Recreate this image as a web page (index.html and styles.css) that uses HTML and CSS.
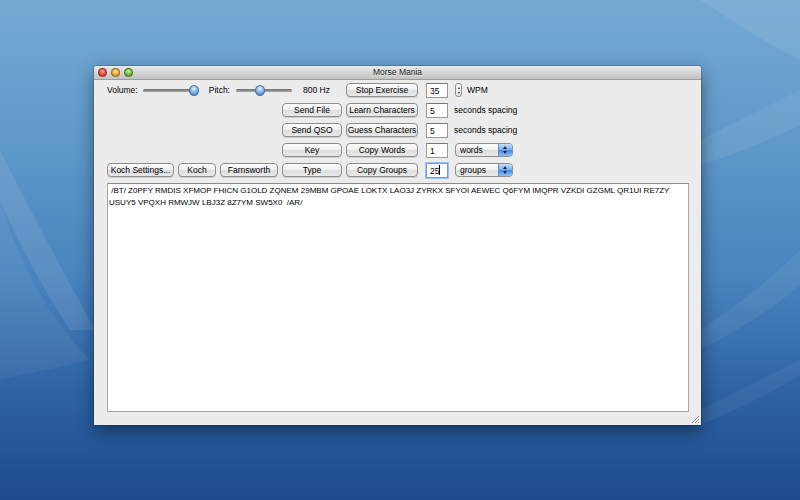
FILE: index.html
```html
<!DOCTYPE html>
<html lang="en">
<head>
    <meta charset="UTF-8">
    <title>Morse Mania</title>
    <link rel="stylesheet" href="styles.css">
</head>
<body>
<div class="desktop">
    <svg class="wallpaper" width="800" height="500" viewBox="0 0 800 500">
        <path d="M0 150 Q40 230 95 330 L70 330 Q25 260 0 200 Z" fill="#ffffff" fill-opacity="0.09"/>
        <path d="M0 200 Q30 300 90 360 L0 380 Z" fill="#ffffff" fill-opacity="0.05"/>
        <path d="M700 0 Q760 40 800 60 L800 0 Z" fill="#ffffff" fill-opacity="0.08"/>
        <path d="M700 140 Q760 110 800 90 L800 125 Q750 150 700 165 Z" fill="#ffffff" fill-opacity="0.07"/>
        <path d="M700 330 Q760 290 800 250 L800 285 Q760 320 700 350 Z" fill="#ffffff" fill-opacity="0.06"/>
        <path d="M700 410 Q760 380 800 360 L800 375 Q760 400 700 425 Z" fill="#ffffff" fill-opacity="0.05"/>
    </svg>

    <div class="window">
        <div class="titlebar">
            <div class="lights">
                <span class="light red"></span>
                <span class="light yellow"></span>
                <span class="light green"></span>
            </div>
            <div class="title">Morse Mania</div>
        </div>

        <div class="content">
            <div class="controls">
                <div class="audio-row">
                    <span class="label">Volume:</span>
                    <div class="slider volume"><div class="track"></div><div class="knob"></div></div>
                    <span class="label pitch-label">Pitch:</span>
                    <div class="slider pitch"><div class="track"></div><div class="knob"></div></div>
                    <span class="label hz">800 Hz</span>
                </div>
                <button class="btn col5">Stop Exercise</button>
                <div class="field col6">35</div>
                <div class="extra col7">
                    <div class="stepper"><span class="up"></span><span class="down"></span></div>
                    <span class="label wpm">WPM</span>
                </div>

                <button class="btn col4">Send File</button>
                <button class="btn col5">Learn Characters</button>
                <div class="field col6">5</div>
                <div class="extra col7"><span class="label spacing">seconds spacing</span></div>

                <button class="btn col4">Send QSO</button>
                <button class="btn col5">Guess Characters</button>
                <div class="field col6">5</div>
                <div class="extra col7"><span class="label spacing">seconds spacing</span></div>

                <button class="btn col4">Key</button>
                <button class="btn col5">Copy Words</button>
                <div class="field col6">1</div>
                <div class="extra col7">
                    <div class="popup"><span class="popup-text">words</span><span class="popup-arrows"></span></div>
                </div>

                <button class="btn">Koch Settings...</button>
                <button class="btn">Koch</button>
                <button class="btn">Farnsworth</button>
                <button class="btn">Type</button>
                <button class="btn">Copy Groups</button>
                <div class="field col6 focused">25<span class="caret"></span></div>
                <div class="extra col7">
                    <div class="popup"><span class="popup-text">groups</span><span class="popup-arrows"></span></div>
                </div>
            </div>

            <div class="output">
                <div class="line">&nbsp;/BT/ Z0PFY RMDIS XFMOP FHICN G1OLD ZQNEM 29MBM GPOAE LOKTX LAO3J ZYRKX SFYOI AEWEC Q6FYM IMQPR VZKDI GZGML QR1UI RE7ZY</div>
                <div class="line">USUY5 VPQXH RMWJW LBJ3Z 8Z7YM SW5X0 &nbsp;/AR/</div>
            </div>
        </div>

        <svg class="grip" width="10" height="10" viewBox="0 0 10 10">
            <path d="M9 2 L2 9 M9 5 L5 9 M9 8 L8 9" stroke="#9a9a9a" stroke-width="1"/>
        </svg>
    </div>
</div>
</body>
</html>
```

FILE: styles.css
```css
body {
    margin: 0;
    overflow: hidden;
    font-family: "Liberation Sans", Arial, sans-serif;
}

.desktop {
    position: relative;
    width: 800px;
    height: 500px;
    background: linear-gradient(180deg, #74a9d4 0%, #629bcb 25%, #4a84be 55%, #2e63a4 78%, #1d4a8c 100%);
    overflow: hidden;
}

.wallpaper {
    position: absolute;
    left: 0;
    top: 0;
}

.window {
    position: absolute;
    left: 94px;
    top: 66px;
    width: 607px;
    height: 359px;
    background: #ececec;
    box-shadow: 0 6px 18px rgba(0, 0, 0, 0.45), 0 0 0 1px rgba(0, 0, 0, 0.15);
    border-radius: 3px 3px 0 0;
}

.titlebar {
    position: relative;
    height: 14px;
    background: linear-gradient(180deg, #eaeaea 0%, #d6d6d6 50%, #c2c2c2 100%);
    border-bottom: 1px solid #9c9c9c;
    border-radius: 3px 3px 0 0;
    box-sizing: border-box;
}

.lights {
    position: absolute;
    left: 4px;
    top: 2px;
    display: flex;
    gap: 4px;
}

.light {
    width: 9px;
    height: 9px;
    border-radius: 50%;
    box-sizing: border-box;
    border: 1px solid rgba(0, 0, 0, 0.35);
}

.red { background: radial-gradient(circle at 50% 35%, #ffb3a8 0%, #f0524a 45%, #b51d15 100%); }
.yellow { background: radial-gradient(circle at 50% 35%, #ffe3a0 0%, #f3b23a 45%, #b57410 100%); }
.green { background: radial-gradient(circle at 50% 35%, #d9f7a6 0%, #7ec34a 45%, #3f8a18 100%); }

.title {
    text-align: center;
    font-size: 8.5px;
    line-height: 13px;
    color: #1a1a1a;
    text-shadow: 0 1px 0 rgba(255, 255, 255, 0.6);
}

.content {
    padding: 0 12px 0 13px;
}

.controls {
    display: grid;
    grid-template-columns: 67px 38px 58px 60px 72px 27px 1fr;
    grid-auto-rows: 20px;
    column-gap: 4px;
    align-items: center;
}

.audio-row {
    grid-column: 1 / 5;
    display: flex;
    align-items: center;
}

.label {
    font-size: 8.5px;
    color: #000;
    white-space: nowrap;
}

.slider {
    position: relative;
    height: 11px;
}

.slider.volume {
    width: 56px;
    margin-left: 5px;
}

.slider.pitch {
    width: 57px;
    margin-left: 6px;
}

.track {
    position: absolute;
    left: 0;
    top: 4px;
    height: 3px;
    border-radius: 2px;
    background: linear-gradient(180deg, #6f6f6f, #a8a8a8);
}

.volume .track { width: 51px; }
.pitch .track { width: 56px; }

.knob {
    position: absolute;
    top: 0;
    width: 10px;
    height: 11px;
    border-radius: 50%;
    box-sizing: border-box;
    border: 1px solid #4b6f9c;
    background: radial-gradient(circle at 50% 30%, #eaf4ff 0%, #8fc0f0 40%, #3576c8 100%);
}

.volume .knob { left: 46px; }
.pitch .knob { left: 19px; }

.pitch-label { margin-left: 10px; }
.hz { margin-left: 10px; }

.btn {
    height: 14px;
    padding: 0;
    border: 1px solid #8d8d8d;
    border-radius: 4px;
    background: linear-gradient(180deg, #fdfdfd 0%, #f1f1f1 45%, #dedede 55%, #e9e9e9 100%);
    box-shadow: 0 1px 0 rgba(0, 0, 0, 0.12);
    font-family: "Liberation Sans", Arial, sans-serif;
    font-size: 8.5px;
    color: #000;
    white-space: nowrap;
    overflow: hidden;
}

.col4 { grid-column: 4; }
.col5 { grid-column: 5; }
.col6 { grid-column: 6; }
.col7 { grid-column: 7; }

.field {
    width: 22px;
    height: 15px;
    margin-left: 4px;
    box-sizing: border-box;
    background: #fff;
    border: 1px solid #9a9a9a;
    border-top-color: #7a7a7a;
    padding-left: 3px;
    font-size: 8.5px;
    line-height: 14px;
    color: #000;
}

.field.focused {
    border-color: #6d9ee0;
    box-shadow: 0 0 0 1px #9cc1ef;
}

.caret {
    display: inline-block;
    width: 1px;
    height: 10px;
    background: #000;
    vertical-align: -1px;
}

.extra {
    display: flex;
    align-items: center;
}

.stepper {
    width: 7px;
    height: 14px;
    margin-left: 2px;
    box-sizing: border-box;
    border: 1px solid #8d8d8d;
    border-radius: 3px;
    background: linear-gradient(180deg, #fafafa, #e1e1e1);
    display: flex;
    flex-direction: column;
    align-items: center;
    justify-content: space-around;
    padding: 1px 0;
}

.stepper .up,
.stepper .down {
    width: 0;
    height: 0;
    border-left: 1.5px solid transparent;
    border-right: 1.5px solid transparent;
}

.stepper .up { border-bottom: 2px solid #333; }
.stepper .down { border-top: 2px solid #333; }

.wpm { margin-left: 5px; }
.spacing { margin-left: 1px; }

.popup {
    display: flex;
    width: 58px;
    height: 14px;
    margin-left: 2px;
    box-sizing: border-box;
    border: 1px solid #8d8d8d;
    border-radius: 4px;
    background: linear-gradient(180deg, #fdfdfd 0%, #f1f1f1 45%, #dedede 55%, #e9e9e9 100%);
    overflow: hidden;
}

.popup-text {
    flex: 1;
    font-size: 8.5px;
    line-height: 12px;
    padding-left: 4px;
    color: #000;
}

.popup-arrows {
    position: relative;
    width: 13px;
    background: linear-gradient(180deg, #c8e0fa 0%, #7fb2ec 45%, #4a8ee0 55%, #8ec0f2 100%);
    border-left: 1px solid #6a8fbf;
}

.popup-arrows::before,
.popup-arrows::after {
    content: "";
    position: absolute;
    left: 4px;
    border-left: 2px solid transparent;
    border-right: 2px solid transparent;
}

.popup-arrows::before {
    top: 2px;
    border-bottom: 3px solid #10264a;
}

.popup-arrows::after {
    bottom: 2px;
    border-top: 3px solid #10264a;
}

.output {
    margin-top: 3px;
    height: 229px;
    box-sizing: border-box;
    background: #fff;
    border: 1px solid #a5a5a5;
    border-top-color: #8a8a8a;
    padding: 1px 1px;
    font-size: 8px;
    line-height: 12px;
    color: #000;
}

.line {
    white-space: nowrap;
}

.grip {
    position: absolute;
    right: 1px;
    bottom: 1px;
}
```
